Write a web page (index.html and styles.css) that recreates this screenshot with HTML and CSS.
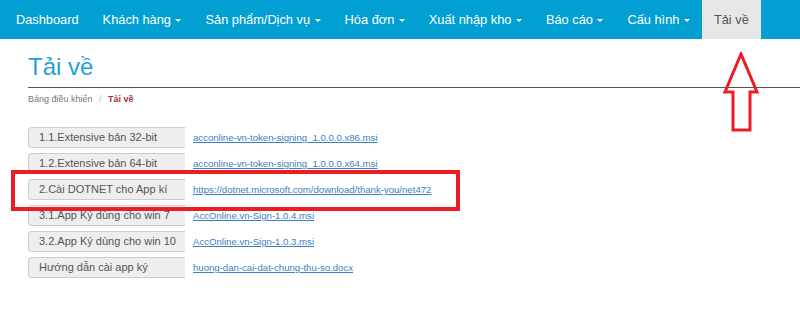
FILE: index.html
```html
<!DOCTYPE html>
<html lang="vi">
  <head>
    <meta charset="UTF-8" />
    <meta name="viewport" content="width=device-width, initial-scale=1.0" />
    <title>Tải về</title>
    <link rel="stylesheet" href="styles.css">
  </head>
  <body>
    <nav class="navbar">
      <a class="nav-item">Dashboard</a>
      <a class="nav-item">Khách hàng <span class="caret"></span></a>
      <a class="nav-item">Sản phẩm/Dịch vụ <span class="caret"></span></a>
      <a class="nav-item">Hóa đơn <span class="caret"></span></a>
      <a class="nav-item">Xuất nhập kho <span class="caret"></span></a>
      <a class="nav-item">Báo cáo <span class="caret"></span></a>
      <a class="nav-item">Cấu hình <span class="caret"></span></a>
      <a class="nav-item active">Tải về</a>
    </nav>
    <div id="content">
      <h1 class="page-title">Tải về</h1>
      <div class="breadcrumb">
        <span>Bảng điều khiển</span>
        <span class="sep">/</span>
        <span class="current">Tải về</span>
      </div>
      <div class="downloads">
        <div class="row">
          <span class="label">1.1.Extensive bản 32-bit</span>
          <a class="link" href="#">acconline-vn-token-signing_1.0.0.0.x86.msi</a>
        </div>
        <div class="row">
          <span class="label">1.2.Extensive bản 64-bit</span>
          <a class="link" href="#">acconline-vn-token-signing_1.0.0.0.x64.msi</a>
        </div>
        <div class="row">
          <span class="label">2.Cài DOTNET cho App kí</span>
          <a class="link" href="#">https://dotnet.microsoft.com/download/thank-you/net472</a>
        </div>
        <div class="row">
          <span class="label">3.1.App Ký dùng cho win 7</span>
          <a class="link" href="#">AccOnline.vn-Sign-1.0.4.msi</a>
        </div>
        <div class="row">
          <span class="label">3.2.App Ký dùng cho win 10</span>
          <a class="link" href="#">AccOnline.vn-Sign-1.0.3.msi</a>
        </div>
        <div class="row">
          <span class="label">Hướng dẫn cài app ký</span>
          <a class="link" href="#">huong-dan-cai-dat-chung-thu-so.docx</a>
        </div>
      </div>
    </div>
    <!-- annotations -->
    <div class="mark-box"></div>
    <svg class="mark-arrow" width="40" height="84" viewBox="0 0 40 84">
      <polygon points="20,2 4,40 12,40 12,78 29,78 29,40 36,40" fill="none" stroke="#ec1c24" stroke-width="3" stroke-linejoin="miter" />
    </svg>
  </body>
</html>
```

FILE: styles.css
```css
* {
  padding: 0;
  margin: 0;
  box-sizing: border-box;
  font-family: "Liberation Sans", Arial, sans-serif;
}
body {
  background-color: white;
}
.navbar {
  display: flex;
  height: 39px;
  padding-left: 4px;
  background-color: #029fd3;
}
.nav-item {
  display: block;
  padding: 0 12px;
  line-height: 39px;
  font-size: 12.8px;
  color: white;
  white-space: nowrap;
}
.nav-item.active {
  background-color: #e7e7e7;
  color: #555;
}
.caret {
  display: inline-block;
  width: 0;
  height: 0;
  margin-left: 1px;
  vertical-align: middle;
  border-top: 3px solid white;
  border-left: 3px solid transparent;
  border-right: 3px solid transparent;
}
#content {
  padding-left: 28px;
}
.page-title {
  margin-top: 13px;
  padding-bottom: 5px;
  border-bottom: 1px solid #555;
  font-size: 24px;
  line-height: 30px;
  font-weight: normal;
  color: #1ea0db;
}
.breadcrumb {
  margin-top: 4px;
  font-size: 9px;
  line-height: 14px;
  color: #777;
}
.breadcrumb .sep {
  padding: 0 4px;
  color: #bbb;
}
.breadcrumb .current {
  color: #a8323e;
  font-weight: bold;
}
.downloads {
  margin-top: 21px;
}
.row {
  display: flex;
  align-items: center;
  height: 21px;
  margin-bottom: 5px;
}
.label {
  width: 157px;
  height: 21px;
  padding-left: 10px;
  line-height: 19px;
  font-size: 11px;
  color: #555;
  background-color: #eee;
  border: 1px solid #ccc;
  border-right: none;
  border-radius: 4px 0 0 4px;
  white-space: nowrap;
}
.link {
  margin-left: 8px;
  font-size: 9.6px;
  color: #3a80c4;
  text-decoration: underline;
}
.mark-box {
  position: absolute;
  left: 11px;
  top: 170px;
  width: 449px;
  height: 41px;
  border: 4px solid #ec1c24;
}
.mark-arrow {
  position: absolute;
  left: 721px;
  top: 52px;
}
```
